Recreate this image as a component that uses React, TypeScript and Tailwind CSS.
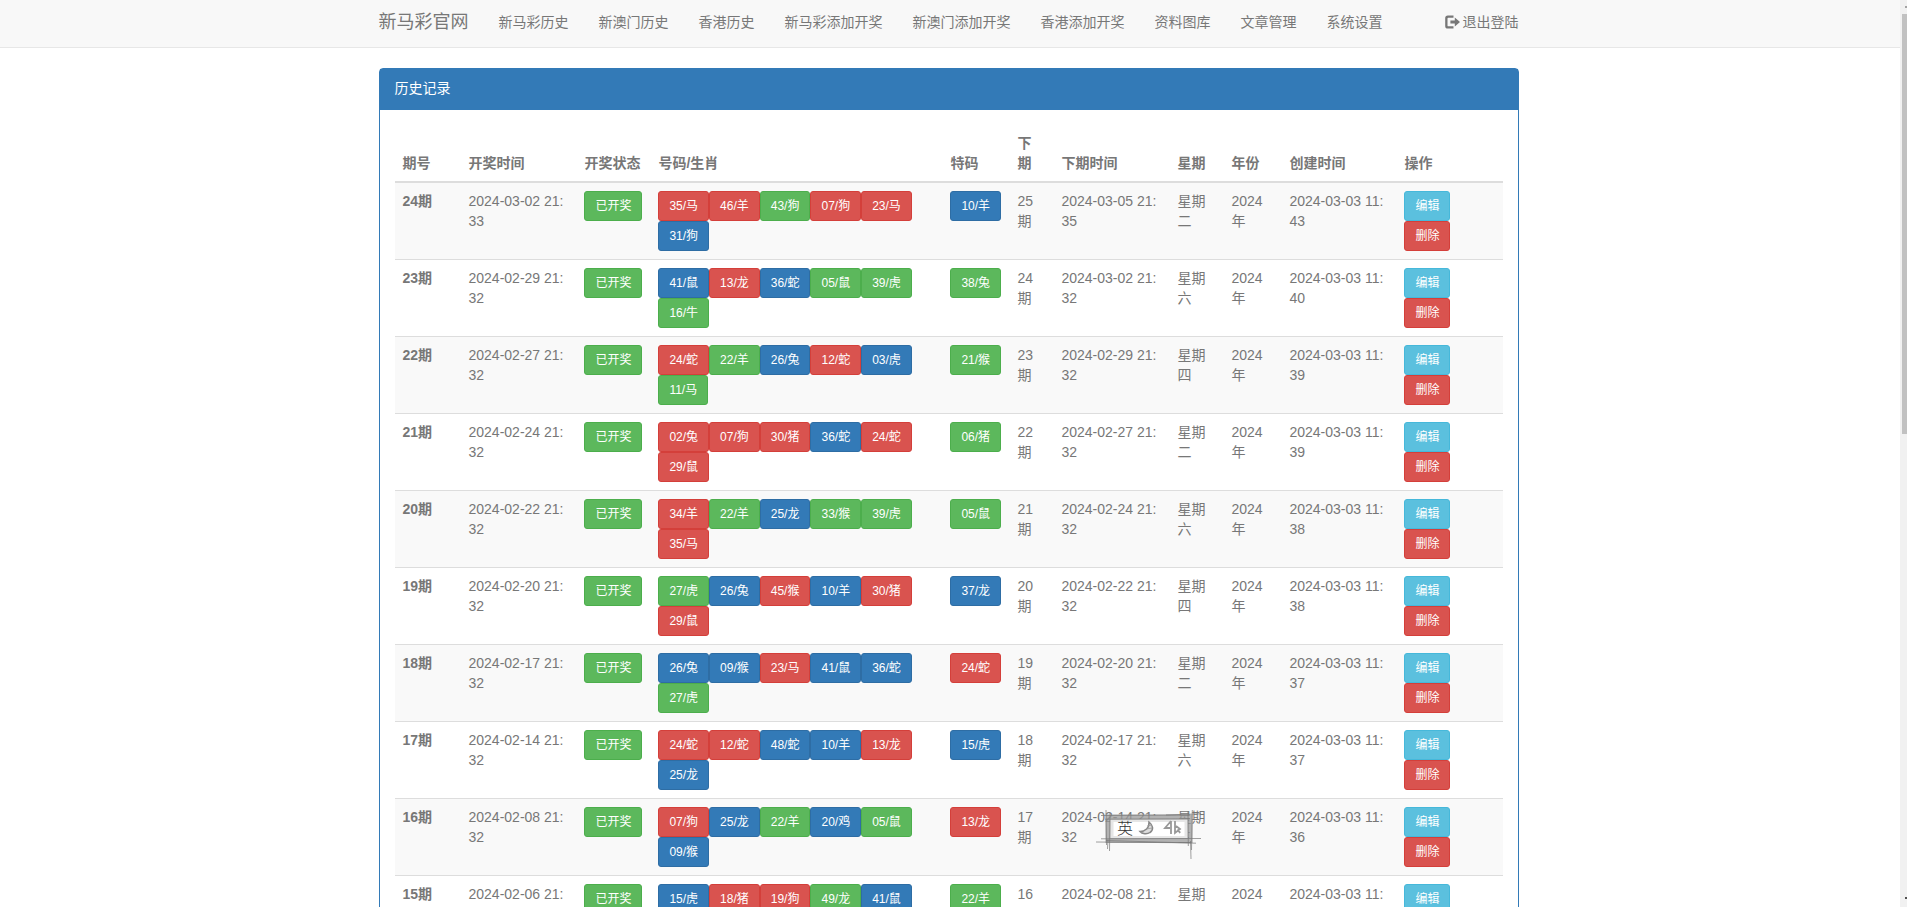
import clsx from "clsx";

type Tone = "r" | "g" | "b";

interface Draw {
  issue: number;
  openedAt: [string, string];
  balls: string;
  special: string;
  nextAt: [string, string];
  weekday: string;
  createdAt: string;
}

const navItems = [
  "新马彩历史",
  "新澳门历史",
  "香港历史",
  "新马彩添加开奖",
  "新澳门添加开奖",
  "香港添加开奖",
  "资料图库",
  "文章管理",
  "系统设置",
];

// Each ball is "<tone><number>/<zodiac>", tone being r(ed), g(reen) or b(lue)
const draws: Draw[] = [
  { issue: 24, openedAt: ["2024-03-02", "33"], balls: "r35/马 r46/羊 g43/狗 r07/狗 r23/马 b31/狗", special: "b10/羊", nextAt: ["2024-03-05", "35"], weekday: "二", createdAt: "43" },
  { issue: 23, openedAt: ["2024-02-29", "32"], balls: "b41/鼠 r13/龙 b36/蛇 g05/鼠 g39/虎 g16/牛", special: "g38/兔", nextAt: ["2024-03-02", "32"], weekday: "六", createdAt: "40" },
  { issue: 22, openedAt: ["2024-02-27", "32"], balls: "r24/蛇 g22/羊 b26/兔 r12/蛇 b03/虎 g11/马", special: "g21/猴", nextAt: ["2024-02-29", "32"], weekday: "四", createdAt: "39" },
  { issue: 21, openedAt: ["2024-02-24", "32"], balls: "r02/兔 r07/狗 r30/猪 b36/蛇 r24/蛇 r29/鼠", special: "g06/猪", nextAt: ["2024-02-27", "32"], weekday: "二", createdAt: "39" },
  { issue: 20, openedAt: ["2024-02-22", "32"], balls: "r34/羊 g22/羊 b25/龙 g33/猴 g39/虎 r35/马", special: "g05/鼠", nextAt: ["2024-02-24", "32"], weekday: "六", createdAt: "38" },
  { issue: 19, openedAt: ["2024-02-20", "32"], balls: "g27/虎 b26/兔 r45/猴 b10/羊 r30/猪 r29/鼠", special: "b37/龙", nextAt: ["2024-02-22", "32"], weekday: "四", createdAt: "38" },
  { issue: 18, openedAt: ["2024-02-17", "32"], balls: "b26/兔 b09/猴 r23/马 b41/鼠 b36/蛇 g27/虎", special: "r24/蛇", nextAt: ["2024-02-20", "32"], weekday: "二", createdAt: "37" },
  { issue: 17, openedAt: ["2024-02-14", "32"], balls: "r24/蛇 r12/蛇 b48/蛇 b10/羊 r13/龙 b25/龙", special: "b15/虎", nextAt: ["2024-02-17", "32"], weekday: "六", createdAt: "37" },
  { issue: 16, openedAt: ["2024-02-08", "32"], balls: "r07/狗 b25/龙 g22/羊 b20/鸡 g05/鼠 b09/猴", special: "r13/龙", nextAt: ["2024-02-14", "32"], weekday: "三", createdAt: "36" },
  { issue: 15, openedAt: ["2024-02-06", "32"], balls: "b15/虎 r18/猪 r19/狗 g49/龙 b41/鼠 r12/蛇", special: "g22/羊", nextAt: ["2024-02-08", "32"], weekday: "四", createdAt: "36" },
];

const tones: Record<Tone | "info", string> = {
  r: "bg-[#d9534f] border-[#d43f3a]",
  g: "bg-[#5cb85c] border-[#4cae4c]",
  b: "bg-[#337ab7] border-[#2e6da4]",
  info: "bg-[#5bc0de] border-[#46b8da]",
};

function Button({ tone, children }: { tone: Tone | "info"; children: string }) {
  return (
    <button
      className={clsx(
        "block h-[30px] rounded-[3px] border px-2.5 text-xs leading-[18px] whitespace-nowrap text-white",
        tones[tone]
      )}
    >
      {children}
    </button>
  );
}

function Ball({ value }: { value: string }) {
  return <Button tone={value[0] as Tone}>{value.slice(1)}</Button>;
}

function TwoLines({ lines }: { lines: [string, string] }) {
  return (
    <div className="whitespace-nowrap">
      {lines[0]}
      <br />
      {lines[1]}
    </div>
  );
}

function LogOutIcon() {
  return (
    <svg viewBox="0 0 15 14" className="h-3.5 w-[15px]" fill="currentColor">
      <path d="M8.500 0.500v2.200H3.400a.9.9 0 0 0-.9.9v6.800a.9.9 0 0 0 .9.9h5.100v2.200H2.800A2.600 2.600 0 0 1 .2 10.900V3.100A2.600 2.600 0 0 1 2.800.5z" />
      <path d="M9.800 2.600 15 7l-5.200 4.400V8.600H5.400V5.400h4.400z" />
    </svg>
  );
}

// Floating input-method bar, drawn as a pencil sketch
function ImeBar() {
  return (
    <div className="fixed top-[808px] left-[1096px] h-[52px] w-[112px]">
      <svg viewBox="0 0 112 52" className="absolute inset-0 h-full w-full" fill="none" stroke="#777">
        <rect x="14" y="11" width="78" height="20" fill="#fff" stroke="none" />
        <rect x="16" y="12.500" width="74" height="17" stroke="#e6e6e6" strokeWidth="3" />
        <rect x="12" y="9" width="82" height="23.500" stroke="#999" strokeOpacity="0.75" strokeWidth="5" />
        <path d="M5 7.500 94 7M9 11.200 94 10.800M70 7 105 5.800M0 34 95 34.800M5 30.800 105 30.500M10 32.500 100 35.200" strokeWidth="0.7" />
        <path d="M10 2 10.500 37M14 5 13.500 43M12 31 11.500 41M92 3 92.300 38M96.300 2 95.500 42M94.500 33 95 51" strokeWidth="0.7" />
        <path d="M53 14c4 3 5 8 1 10.500-3 2-8 1.500-10-1 5 0 9.500-3.500 9-9.500z" fill="#ddd" stroke="#888" strokeWidth="1.500" />
        <path d="M50 21l6-1M51 18l5-1" stroke="#999" strokeWidth="0.8" />
        <path d="M75 13l-6 7 5 0M75 13v13M79 13v12l5-4-4-3M82 21l2 4" stroke="#999" strokeWidth="1.800" />
      </svg>
      <span className="absolute top-[11px] left-[21px] text-[16px] leading-5 font-light text-[#333]">英</span>
    </div>
  );
}

function Scrollbar() {
  return (
    <div className="fixed inset-y-0 right-0 w-[7px] overflow-hidden bg-[#f1f1f1] pt-3.5 pl-0.5">
      <div className="h-[420px] bg-[#c1c1c1]" />
      <div className="absolute top-1.5 right-0 h-0.5 w-0.5 bg-[#a3a3a3]" />
      <div className="absolute right-0 bottom-2 h-0.5 w-0.5 bg-[#505050]" />
    </div>
  );
}

export default function App() {
  const thLeft = "px-2 pb-2 text-left align-bottom font-bold";
  const th = "pr-2 pb-2 pl-[8.9px] text-left align-bottom font-bold whitespace-nowrap";
  const tdLeft = "p-2 align-top";
  const td = "py-2 pl-[8.9px] align-top";

  return (
    <div className="h-[907px] overflow-hidden bg-white pr-2.5 font-['Liberation_Sans','Noto_Sans_CJK_SC',sans-serif] text-sm leading-5 text-[#777]">
      <nav className="-mr-2.5 h-12 border-b border-[#e7e7e7] bg-[#f8f8f8] pr-2.5">
        <div className="mx-auto flex w-[1140px] items-center pt-3">
          <a className="pr-[15px] text-lg leading-5">新马彩官网</a>
          {navItems.map((item) => (
            <a key={item} className="px-[15px]">
              {item}
            </a>
          ))}
          <a className="ml-auto flex items-center gap-[3px]">
            <LogOutIcon />
            退出登陆
          </a>
        </div>
      </nav>

      <section className="mx-auto mt-5 w-[1140px] rounded border border-[#337ab7]">
        <h3 className="h-[41px] bg-[#337ab7] px-[15px] pt-[9px] text-white">历史记录</h3>
        <div className="p-[15px]">
          <table className="w-full table-fixed border-collapse">
            <colgroup>
              <col className="w-[66px]" />
              <col className="w-[115px]" />
              <col className="w-[74px]" />
              <col className="w-[292px]" />
              <col className="w-[67px]" />
              <col className="w-[44px]" />
              <col className="w-[116px]" />
              <col className="w-[54px]" />
              <col className="w-[58px]" />
              <col className="w-[115px]" />
              <col className="w-[107px]" />
            </colgroup>
            <thead>
              <tr className="h-[57px] border-b-2 border-[#ddd]">
                <th className={thLeft}>期号</th>
                <th className={thLeft}>开奖时间</th>
                <th className={th}>开奖状态</th>
                <th className={th}>号码/生肖</th>
                <th className={th}>特码</th>
                <th className={th}>
                  <TwoLines lines={["下", "期"]} />
                </th>
                <th className={th}>下期时间</th>
                <th className={th}>星期</th>
                <th className={th}>年份</th>
                <th className={th}>创建时间</th>
                <th className={th}>操作</th>
              </tr>
            </thead>
            <tbody>
              {draws.map((draw) => (
                <tr key={draw.issue} className="border-b border-[#ddd] odd:bg-[#f9f9f9]">
                  <td className={clsx(tdLeft, "font-bold")}>{draw.issue}期</td>
                  <td className={tdLeft}>
                    <TwoLines lines={[`${draw.openedAt[0]} 21:`, draw.openedAt[1]]} />
                  </td>
                  <td className={td}>
                    <Button tone="g">已开奖</Button>
                  </td>
                  <td className={td}>
                    <div className="flex w-[276px] flex-wrap">
                      {draw.balls.split(" ").map((ball) => (
                        <Ball key={ball} value={ball} />
                      ))}
                    </div>
                  </td>
                  <td className={td}>
                    <Ball value={draw.special} />
                  </td>
                  <td className={td}>
                    <TwoLines lines={[`${draw.issue + 1}`, "期"]} />
                  </td>
                  <td className={td}>
                    <TwoLines lines={[`${draw.nextAt[0]} 21:`, draw.nextAt[1]]} />
                  </td>
                  <td className={td}>
                    <TwoLines lines={["星期", draw.weekday]} />
                  </td>
                  <td className={td}>
                    <TwoLines lines={["2024", "年"]} />
                  </td>
                  <td className={td}>
                    <TwoLines lines={["2024-03-03 11:", draw.createdAt]} />
                  </td>
                  <td className={td}>
                    <Button tone="info">编辑</Button>
                    <Button tone="r">删除</Button>
                  </td>
                </tr>
              ))}
            </tbody>
          </table>
        </div>
      </section>

      <ImeBar />
      <Scrollbar />
    </div>
  );
}
